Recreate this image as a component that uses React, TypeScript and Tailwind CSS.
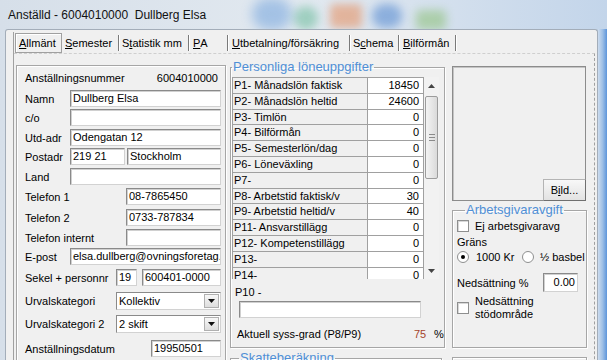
import React from "react";

type FieldProps = { value?: string; className?: string; right?: boolean };

const Field = ({ value, className, right }: FieldProps) => (
  <div
    className={
      "h-[17px] bg-white border border-t-[#8a8a8a] border-l-[#8a8a8a] border-r-[#d2d2d2] border-b-[#d2d2d2] shadow-[inset_1px_1px_0_#d0d0d0] px-[2px] leading-[15px] whitespace-nowrap overflow-hidden " +
      (right ? "text-right " : "") +
      (className ?? "")
    }
  >
    {value}
  </div>
);

const Combo = ({ value }: { value: string }) => (
  <div className="flex-1 h-[18px] bg-white border border-t-[#8a8a8a] border-l-[#8a8a8a] border-r-[#d2d2d2] border-b-[#d2d2d2] flex items-center pl-[2px]">
    <span className="flex-1 leading-[14px]">{value}</span>
    <div className="w-[15px] h-[14px] mr-px bg-gradient-to-b from-[#f7f7f7] to-[#dedede] border border-[#b0b0b0] flex items-center justify-center">
      <svg width="7" height="4" viewBox="0 0 7 4">
        <path d="M0 0h7L3.5 4z" fill="#111" />
      </svg>
    </div>
  </div>
);

type RowProps = { label: string; labelW: string; mt: string; children?: React.ReactNode };

const Row = ({ label, labelW, mt, children }: RowProps) => (
  <div className={"flex h-[17px] items-center " + mt}>
    <span className={"shrink-0 whitespace-nowrap " + labelW}>{label}</span>
    {children}
  </div>
);

const Tab = ({ w, children }: { w: string; children: React.ReactNode }) => (
  <div className={"h-[16px] flex items-center border-r border-r-[#7a7a7a] shadow-[1px_0_0_#fff] whitespace-nowrap " + w}>
    {children}
  </div>
);

const Check = () => <div className="w-[12px] h-[12px] shrink-0 bg-white border border-[#8e8f8f] shadow-[inset_1px_1px_0_#d8d8d8]" />;

const Radio = ({ on }: { on?: boolean }) => (
  <div className="w-[12px] h-[12px] shrink-0 rounded-full bg-white border border-[#8e8f8f] flex items-center justify-center">
    {on ? <div className="w-[4px] h-[4px] rounded-full bg-black" /> : null}
  </div>
);

const pRows: [string, string][] = [
  ["P1- Månadslön faktisk", "18450"],
  ["P2- Månadslön heltid", "24600"],
  ["P3- Timlön", "0"],
  ["P4- Bilförmån", "0"],
  ["P5- Semesterlön/dag", "0"],
  ["P6- Löneväxling", "0"],
  ["P7-", "0"],
  ["P8- Arbetstid faktisk/v", "30"],
  ["P9- Arbetstid heltid/v", "40"],
  ["P11- Ansvarstillägg", "0"],
  ["P12- Kompetenstillägg", "0"],
  ["P13-", "0"],
  ["P14-", "0"],
];

const groupBox = "border border-[#a6a6a6] shadow-[inset_1px_1px_0_#fff,1px_1px_0_#fff]";
const legend = "text-[13px] leading-[16px] text-[#4f8fd6] px-[1px]";

export default function App() {
  return (
    <div className="relative w-[607px] h-[360px] overflow-hidden flex flex-col bg-gradient-to-r from-[#d6dfe9] via-[#e2e9f0] to-[#c3d5ea] font-['Liberation_Sans',Arial,sans-serif] text-[11px] leading-[14px] text-black">
      {/* desktop seen through the glass title bar */}
      <div className="absolute left-[252px] top-[-2px] w-[40px] h-[32px] rounded-full bg-[#4a8ad6] opacity-40 blur-[6px]" />
      <div className="absolute left-[294px] top-[6px] w-[24px] h-[24px] rounded-full bg-[#3aa878] opacity-40 blur-[5px]" />
      <div className="absolute left-[330px] top-[4px] w-[32px] h-[24px] rounded-[4px] bg-[#e8783a] opacity-45 blur-[4px]" />
      <div className="absolute left-[372px] top-[4px] w-[30px] h-[24px] rounded-full bg-[#2f70c8] opacity-45 blur-[5px]" />
      <div className="absolute left-[416px] top-[10px] w-[30px] h-[20px] rounded-[4px] bg-[#7ab85a] opacity-45 blur-[5px]" />

      <div className="relative h-[29px] shrink-0 pl-[8px] flex items-center text-[12px] text-[#111]">
        Anställd - 6004010000&nbsp;&nbsp;Dullberg Elsa
      </div>

      <div className="relative flex flex-1">
        <div className="w-[5px] shrink-0" />
        <div className="w-[593px] bg-[#f0f0f0] border-t border-l border-r border-[#a3adb9] rounded-t-[3px]">
          <div className="ml-[7px] mt-[2px] w-[582px] h-full border-l border-[#a0a0a0] flex flex-col">
            {/* tabs */}
            <div className="flex h-[21px] items-center pl-px shrink-0">
              <div className="w-[47px] h-[20px] border border-[#a0a0a0] shadow-[inset_1px_1px_0_#fff] flex items-center pl-[3px]">
                <u>A</u>llmänt
              </div>
              <Tab w="w-[57px] pl-[3px]"><u>S</u>emester</Tab>
              <Tab w="w-[70px] pl-[3px]">S<u>t</u>atistik mm</Tab>
              <Tab w="w-[39px] pl-[4px]"><u>P</u>A</Tab>
              <Tab w="w-[122px] pl-[4px]"><u>U</u>tbetalning/försäkring</Tab>
              <Tab w="w-[49px] pl-[3px]">S<u>c</u>hema</Tab>
              <Tab w="w-[57px] pl-[4px]"><u>B</u>ilförmån</Tab>
            </div>

            {/* panel */}
            <div className="flex-1 border-t border-dashed border-t-[#cfcfcf] border-r border-r-[#a0a0a0] pl-[2px] pt-[11px] flex items-start">
              {/* left group */}
              <div className={"w-[210px] h-[300px] pl-[8px] pr-[4px] pt-[3px] " + groupBox}>
                <div className="flex h-[17px] items-center justify-between pr-[3px]">
                  <span>Anställningsnummer</span>
                  <span>6004010000</span>
                </div>
                <Row label="Namn" labelW="w-[45px]" mt="mt-[4px]">
                  <Field value="Dullberg Elsa" className="flex-1" />
                </Row>
                <Row label="c/o" labelW="w-[45px]" mt="mt-[2px]">
                  <Field className="flex-1" />
                </Row>
                <Row label="Utd-adr" labelW="w-[45px]" mt="mt-[3px]">
                  <Field value="Odengatan 12" className="flex-1" />
                </Row>
                <Row label="Postadr" labelW="w-[45px]" mt="mt-[2px]">
                  <Field value="219 21" className="w-[55px]" />
                  <Field value="Stockholm" className="flex-1 ml-[2px]" />
                </Row>
                <Row label="Land" labelW="w-[45px]" mt="mt-[3px]">
                  <Field className="flex-1" />
                </Row>
                <Row label="Telefon 1" labelW="w-[101px]" mt="mt-[3px]">
                  <Field value="08-7865450" className="flex-1" />
                </Row>
                <Row label="Telefon 2" labelW="w-[101px]" mt="mt-[4px]">
                  <Field value="0733-787834" className="flex-1" />
                </Row>
                <Row label="Telefon internt" labelW="w-[101px]" mt="mt-[3px]">
                  <Field className="flex-1" />
                </Row>
                <Row label="E-post" labelW="w-[45px]" mt="mt-[2px]">
                  <Field value="elsa.dullberg@ovningsforetag.se" className="flex-1" />
                </Row>
                <Row label="Sekel + personnr" labelW="w-[91px]" mt="mt-[4px]">
                  <Field value="19" className="w-[21px]" />
                  <Field value="600401-0000" className="flex-1 ml-[5px]" />
                </Row>
                <Row label="Urvalskategori" labelW="w-[91px]" mt="mt-[6px]">
                  <Combo value="Kollektiv" />
                </Row>
                <Row label="Urvalskategori 2" labelW="w-[91px]" mt="mt-[6px]">
                  <Combo value="2 skift" />
                </Row>
                <Row label="Anställningsdatum" labelW="w-[126px]" mt="mt-[8px]">
                  <Field value="19950501" className="flex-1" />
                </Row>
              </div>

              {/* middle column */}
              <div className="ml-[4px] w-[212px] -mt-[6px] flex flex-col">
                <fieldset className={"w-[212px] pb-[6px] " + groupBox}>
                  <legend className={legend + " ml-px"}>Personliga löneuppgifter</legend>
                  <div className="mt-[2px] ml-px flex h-[202px] w-[207px]">
                    <div className="w-[192px] h-full overflow-hidden border-l border-t border-[#a0a0a0]">
                      {pRows.map(([l, v]) => (
                        <div key={l} className="flex h-[15.8px]">
                          <div className="w-[135px] bg-[#f0f0f0] border-r border-b border-[#a0a0a0] pl-px leading-[15px] whitespace-nowrap overflow-hidden">{l}</div>
                          <div className="flex-1 bg-white border-r border-b border-[#a0a0a0] pr-[4px] text-right leading-[15px]">{v}</div>
                        </div>
                      ))}
                    </div>
                    <div className="w-[15px] h-full bg-[#f2f2f2] flex flex-col items-center">
                      <div className="h-[17px] flex items-center justify-center">
                        <svg width="7" height="4" viewBox="0 0 7 4">
                          <path d="M0 4h7L3.5 0z" fill="#444" />
                        </svg>
                      </div>
                      <div className="w-[13px] h-[83px] mt-[2px] rounded-[2px] border border-[#9c9c9c] bg-gradient-to-r from-[#f4f4f4] to-[#dadada] flex flex-col items-center justify-center gap-[2px]">
                        <div className="w-[6px] h-px bg-[#8a8a8a]" />
                        <div className="w-[6px] h-px bg-[#8a8a8a]" />
                        <div className="w-[6px] h-px bg-[#8a8a8a]" />
                      </div>
                      <div className="flex-1" />
                      <div className="h-[17px] flex items-center justify-center">
                        <svg width="7" height="4" viewBox="0 0 7 4">
                          <path d="M0 0h7L3.5 4z" fill="#444" />
                        </svg>
                      </div>
                    </div>
                  </div>
                  <div className="mt-[6px] ml-[4px]">P10 -</div>
                  <Field className="mt-[2px] ml-[8px] w-[182px]" />
                  <div className="mt-[9px] ml-[6px] flex items-center">
                    <span className="w-[177px]">Aktuell syss-grad (P8/P9)</span>
                    <span className="w-[9px] text-right text-[#a5442a]">75</span>
                    <span className="ml-[11px]">%</span>
                  </div>
                </fieldset>
                <fieldset className={"w-[212px] mt-[2px] h-[40px] " + groupBox}>
                  <legend className={legend + " ml-[8px]"}>Skatteberäkning</legend>
                </fieldset>
              </div>

              {/* right column */}
              <div className="ml-[10px] w-[135px] flex flex-col">
                <div className="mt-px w-[134px] h-[135px] border border-[#8c8c8c] shadow-[inset_1px_1px_0_#c4c4c4] flex flex-col justify-end items-end">
                  <div className="w-[43px] h-[22px] -mr-px -mb-px bg-gradient-to-b from-[#f8f8f8] to-[#e2e2e2] border border-[#b4b4b4] border-b-[#6f6f6f] border-r-[#6f6f6f] flex items-center justify-center">
                    B<u>i</u>ld...
                  </div>
                </div>
                <fieldset className={"w-[135px] mt-px h-[146px] pl-[4px] " + groupBox}>
                  <legend className={legend + " ml-[8px]"}>Arbetsgivaravgift</legend>
                  <div className="mt-px flex items-center h-[14px]">
                    <Check />
                    <span className="ml-[6px] whitespace-nowrap">Ej arbetsgivaravg</span>
                  </div>
                  <div className="mt-[2px]">Gräns</div>
                  <div className="mt-px flex items-center h-[14px]">
                    <Radio on />
                    <span className="ml-[7px] w-[46px]">1000 Kr</span>
                    <Radio />
                    <span className="ml-[6px] whitespace-nowrap">½ basbel</span>
                  </div>
                  <div className="mt-[9px] flex items-center h-[19px]">
                    <span className="w-[86px]">Nedsättning %</span>
                    <Field value="0.00" right className="w-[35px] h-[19px] leading-[17px]" />
                  </div>
                  <div className="mt-[3px] flex items-center">
                    <Check />
                    <div className="ml-[6px] leading-[13px]">
                      Nedsättning
                      <br />
                      stödområde
                    </div>
                  </div>
                </fieldset>
                <div className={"mt-[9px] w-[135px] h-[40px] " + groupBox} />
              </div>
            </div>
          </div>
        </div>
        <div className="w-[9px] shrink-0 bg-gradient-to-r from-[#cddcee] via-[#9fc0e6] to-[#5d95da]" />
      </div>
    </div>
  );
}
